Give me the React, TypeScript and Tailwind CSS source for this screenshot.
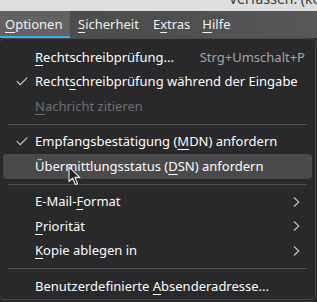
import React from 'react';

type Item =
  | { kind: 'sep' }
  | {
      kind: 'item';
      label: React.ReactNode;
      shortcut?: string;
      checked?: boolean;
      disabled?: boolean;
      active?: boolean;
      submenu?: boolean;
    };

const U = ({ children }: { children: React.ReactNode }) => (
  <span className="underline decoration-1 underline-offset-[3px]">{children}</span>
);

const items: Item[] = [
  { kind: 'item', label: <><U>R</U>echtschreibprüfung...</>, shortcut: 'Strg+Umschalt+P' },
  { kind: 'item', label: <>Recht<U>s</U>chreibprüfung während der Eingabe</>, checked: true },
  { kind: 'item', label: <><U>N</U>achricht zitieren</>, disabled: true },
  { kind: 'sep' },
  { kind: 'item', label: <>Empfangsbestätigung (<U>M</U>DN) anfordern</>, checked: true },
  { kind: 'item', label: <>Übermittlungsstatus (<U>D</U>SN) anfordern</>, active: true },
  { kind: 'sep' },
  { kind: 'item', label: <>E-Mail-<U>F</U>ormat</>, submenu: true },
  { kind: 'item', label: <><U>P</U>riorität</>, submenu: true },
  { kind: 'item', label: <><U>K</U>opie ablegen in</>, submenu: true },
  { kind: 'sep' },
  { kind: 'item', label: <>Benutzerdefinierte <U>A</U>bsenderadresse...</> },
];

function Check() {
  return (
    <svg width="12" height="9" viewBox="0 0 12 9" fill="none">
      <path d="M0.8 4.2 L4.2 7.6 L11.2 0.6" stroke="#cfd0d1" strokeWidth="1.1" />
    </svg>
  );
}

function Chevron() {
  return (
    <svg width="7" height="10" viewBox="0 0 7 10" fill="none">
      <path d="M1 0.5 L5.8 5 L1 9.5" stroke="#c8c9ca" strokeWidth="1.1" />
    </svg>
  );
}

function Cursor() {
  return (
    <svg width="14" height="20" viewBox="0 0 14 20" className="absolute left-[68px] top-[166px]">
      <path
        d="M1 1 L1 15.5 L4.6 12.2 L7.4 18.4 L9.6 17.4 L6.9 11.4 L11.8 11.4 Z"
        fill="#232323"
        stroke="#e8e8e8"
        strokeWidth="1.1"
        strokeLinejoin="round"
      />
    </svg>
  );
}

export default function App() {
  return (
    <div
      className="relative w-[317px] h-[302px] overflow-hidden bg-[#29292b] text-[13px] leading-none"
      style={{ fontFamily: '"Noto Sans", "Open Sans", sans-serif' }}
    >
      {/* window title strip, only its lower edge is in view */}
      <div className="h-[11px] bg-[#dedede] overflow-hidden relative">
        <span className="absolute left-[229px] top-[-8px] text-[14px] text-[#3a3a3a] whitespace-nowrap">
          Verfassen: (ke
        </span>
      </div>

      {/* menubar */}
      <div className="h-[27px] bg-gradient-to-r from-[#4b4b4c] via-[#4e4e4f] to-[#58585a] flex items-stretch text-[#eff0f1]">
        <div className="w-[70px] bg-[#626263] border-b-[2px] border-[#3daee9] flex items-center pl-[5px] pt-[1px]">
          <U>O</U>ptionen
        </div>
        <div className="flex items-center pl-[8px] pr-[7px]">
          <U>S</U>icherheit
        </div>
        <div className="flex items-center px-[7px]">
          E<U>x</U>tras
        </div>
        <div className="flex items-center px-[5px]">
          <U>H</U>ilfe
        </div>
      </div>

      {/* popup menu */}
      <div className="ml-[-1px] w-[317px] h-[262px] rounded-[5px] border border-[#47474a] bg-[#29292b] px-[3px] pt-[6px]">
        {items.map((it, i) =>
          it.kind === 'sep' ? (
            <div key={i} className="h-[11px] flex items-center px-[5px]">
              <div className="h-px w-full bg-[#525254]" />
            </div>
          ) : (
            <div
              key={i}
              className={
                'h-[24.5px] flex items-center rounded-[4px] ' +
                (it.active ? 'bg-[#4a4a4c] ' : '') +
                (it.disabled ? 'text-[#6e6e70]' : 'text-[#fcfcfc]')
              }
            >
              <div className="w-[32px] flex justify-end pr-[7px]">{it.checked && <Check />}</div>
              <div className="flex-1 whitespace-nowrap">{it.label}</div>
              {it.shortcut && <div className="text-[#a3a4a5] pr-[7px] whitespace-nowrap">{it.shortcut}</div>}
              {it.submenu && (
                <div className="pr-[12px] flex items-center">
                  <Chevron />
                </div>
              )}
            </div>
          )
        )}
      </div>

      <Cursor />
    </div>
  );
}
